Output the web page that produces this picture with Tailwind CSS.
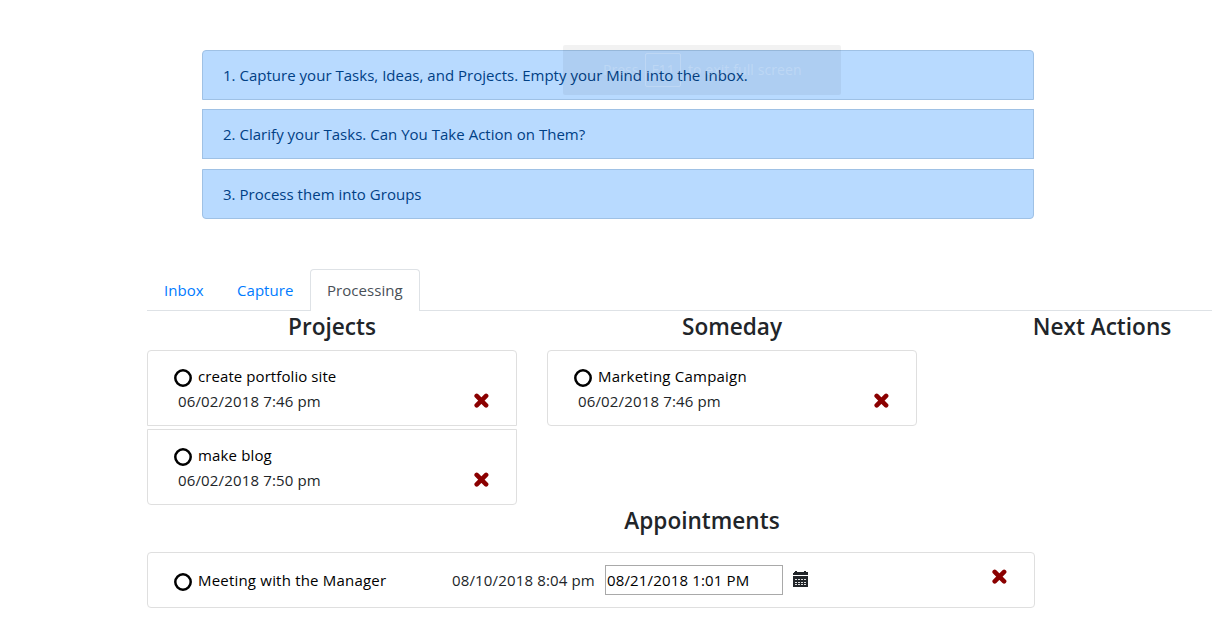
<!DOCTYPE html>
<html lang="en">
<head>
<meta charset="utf-8">
<title>Processing</title>
<script src="https://cdn.jsdelivr.net/npm/@tailwindcss/browser@4"></script>
</head>
<body class="relative h-[632px] w-[1212px] overflow-hidden bg-white font-['Open_Sans','Noto_Sans',sans-serif] text-[15px] leading-6 tracking-[0.15px] text-[#212529]">
<svg class="hidden">
  <symbol id="x" viewBox="0 0 16 16"><path d="M3.7 2.9 13.1 12.3M13.1 2.9 3.7 12.3" stroke="#8b0000" stroke-width="4.6" stroke-linecap="round"/></symbol>
  <symbol id="o" viewBox="0 0 18 18"><circle cx="9" cy="9" r="7.7" fill="none" stroke="#000" stroke-width="2.5"/></symbol>
</svg>
<ol class="ml-[202px] flex w-[832px] flex-col pt-[50px] tracking-[0.02px] text-[#004085]">
  <li class="flex h-[50px] items-center rounded-t border border-[#9fc1e5] bg-[#b8daff] pl-5"><span class="whitespace-nowrap">1. Capture your Tasks, Ideas, and Projects. Empty your Mind into the Inbox.</span></li>
  <li class="mt-[9px] flex h-[50px] items-center border border-[#9fc1e5] bg-[#b8daff] pl-5"><span class="whitespace-nowrap">2. Clarify your Tasks. Can You Take Action on Them?</span></li>
  <li class="mt-[10px] flex h-[50px] items-center rounded-b border border-[#9fc1e5] bg-[#b8daff] pl-5"><span class="whitespace-nowrap">3. Process them into Groups</span></li>
</ol>
<div class="absolute left-[563px] top-[45px] flex h-[50px] w-[278px] items-center rounded-xs bg-black/5 pl-10 text-[14px] tracking-normal text-white/20">
  <span class="w-[42px]">Press</span><span class="flex h-[34px] w-[36px] items-center justify-center rounded-xs border border-white/20">F11</span><span class="ml-[7px] whitespace-nowrap tracking-[0.1px]">to exit full screen</span>
</div>
<nav class="ml-[147px] mt-[50px] flex h-[42px] border-b border-[#dee2e6] tracking-[0.05px] text-[#007bff]">
  <a class="w-[73px] pl-[17px] pt-[9px]">Inbox</a>
  <a class="w-[90px] pl-[17px] pt-[9px]">Capture</a>
  <a class="h-[42px] w-[110px] rounded-t border border-b-0 border-[#dee2e6] bg-white pl-4 pt-2 text-[#495057]">Processing</a>
</nav>
<main class="ml-[147px]">
  <div class="flex h-[194px] w-[1110px] gap-[30px]">
    <section class="w-[370px]">
      <h4 class="h-[39px] pt-px text-center text-[22.6px] font-semibold tracking-normal leading-[29px]">Projects</h4>
      <div class="h-[76px] rounded-t border border-[#dfdfdf] pl-[26px] pr-[27px] pt-[13px]">
        <div class="flex h-[25px] text-black"><svg class="mt-[5px] size-[18px]"><use href="#o"/></svg><span class="ml-[6px] tracking-[0.08px]">create portfolio site</span></div>
        <div class="flex items-center justify-between pl-1"><span>06/02/2018 7:46 pm</span><svg class="size-4"><use href="#x"/></svg></div>
      </div>
      <div class="mt-[3px] h-[76px] rounded-b border border-[#dfdfdf] pl-[26px] pr-[27px] pt-[13px]">
        <div class="flex h-[25px] text-black"><svg class="mt-[5px] size-[18px]"><use href="#o"/></svg><span class="ml-[6px]">make blog</span></div>
        <div class="flex items-center justify-between pl-1"><span>06/02/2018 7:50 pm</span><svg class="size-4"><use href="#x"/></svg></div>
      </div>
    </section>
    <section class="w-[370px]">
      <h4 class="h-[39px] pt-px text-center text-[22.6px] font-semibold tracking-normal leading-[29px]">Someday</h4>
      <div class="h-[76px] rounded border border-[#dfdfdf] pl-[26px] pr-[27px] pt-[13px]">
        <div class="flex h-[25px] text-black"><svg class="mt-[5px] size-[18px]"><use href="#o"/></svg><span class="ml-[6px] tracking-[0.22px]">Marketing Campaign</span></div>
        <div class="flex items-center justify-between pl-1"><span>06/02/2018 7:46 pm</span><svg class="size-4"><use href="#x"/></svg></div>
      </div>
    </section>
    <section class="w-[310px]">
      <h4 class="pt-px text-center text-[22.6px] font-semibold tracking-normal leading-[29px]">Next Actions</h4>
    </section>
  </div>
  <h4 class="h-[47px] w-[1110px] pt-px text-center text-[22.6px] font-semibold tracking-normal leading-[29px]">Appointments</h4>
  <div class="flex h-[56px] w-[888px] items-center rounded border border-[#dfdfdf] pl-[26px] pr-[27px]">
    <svg class="mt-[4px] size-[18px]"><use href="#o"/></svg>
    <span class="ml-[6px] w-[254px] tracking-[0.2px] text-black">Meeting with the Manager</span>
    <span class="w-[153px] whitespace-nowrap">08/10/2018 8:04 pm</span>
    <span class="flex h-[30px] w-[178px] items-center border border-[#a9a9a9] pl-px text-black">08/21/2018 1:01 PM</span>
    <svg class="mb-0.5 ml-[10px] h-4 w-[15px]" viewBox="0 0 15 16" fill="#212529" shape-rendering="crispEdges"><path d="M1 1h1V0h2v1h7V0h2v1h1l1 1v2H0V2zM0 5h15v11H0z"/><path fill="#fff" fill-opacity=".85" d="M2 8h2v1H2zM5 8h2v1H5zM8 8h2v1H8zM11 8h2v1h-2zM2 11h2v1H2zM5 11h2v1H5zM8 11h2v1H8zM11 11h2v1h-2zM2 13h2v1H2zM5 13h2v1H5zM8 13h2v1H8zM11 13h2v1h-2z"/></svg>
    <svg class="mb-1.5 ml-auto size-4"><use href="#x"/></svg>
  </div>
</main>
</body>
</html>
